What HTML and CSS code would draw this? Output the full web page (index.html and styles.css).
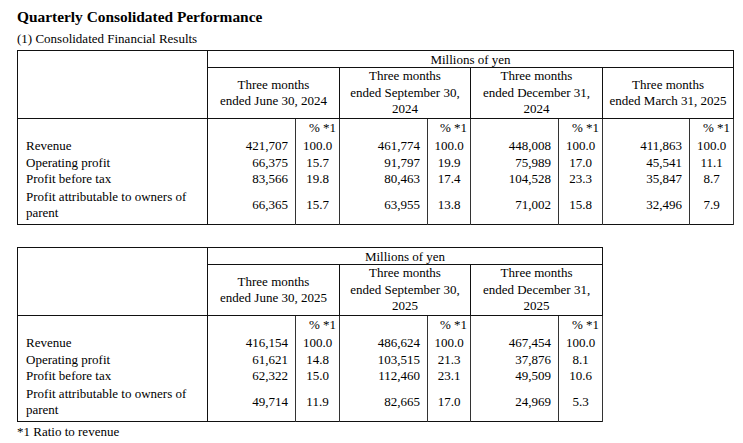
FILE: index.html
```html
<!DOCTYPE html>
<html>
<head>
<meta charset="utf-8">
<link rel="stylesheet" href="styles.css">
</head>
<body>
<div class="page">
  <h1 class="title">Quarterly Consolidated Performance</h1>
  <p class="subtitle">(1) Consolidated Financial Results</p>

  <table class="fin fin-wide">
    <colgroup>
      <col class="c-label"><col class="c-val"><col class="c-pct"><col class="c-val"><col class="c-pct2"><col class="c-val"><col class="c-pct"><col class="c-val2"><col class="c-pct">
    </colgroup>
    <tr class="r-unit">
      <th class="blank" rowspan="2"></th>
      <th colspan="8" class="unit">Millions of yen</th>
    </tr>
    <tr class="r-period">
      <th colspan="2">Three months<br>ended June 30, 2024</th>
      <th colspan="2">Three months<br>ended September 30,<br>2024</th>
      <th colspan="2">Three months<br>ended December 31,<br>2024</th>
      <th colspan="2">Three months<br>ended March 31, 2025</th>
    </tr>
    <tr class="r-pcthead">
      <td class="lbl"></td>
      <td class="v"></td><td class="p ph">% *1</td>
      <td class="v"></td><td class="p ph">% *1</td>
      <td class="v"></td><td class="p ph">% *1</td>
      <td class="v"></td><td class="p ph">% *1</td>
    </tr>
    <tr class="r-first">
      <td class="lbl">Revenue</td>
      <td class="v">421,707</td><td class="p">100.0</td>
      <td class="v">461,774</td><td class="p">100.0</td>
      <td class="v">448,008</td><td class="p">100.0</td>
      <td class="v">411,863</td><td class="p">100.0</td>
    </tr>
    <tr class="r-data">
      <td class="lbl">Operating profit</td>
      <td class="v">66,375</td><td class="p">15.7</td>
      <td class="v">91,797</td><td class="p">19.9</td>
      <td class="v">75,989</td><td class="p">17.0</td>
      <td class="v">45,541</td><td class="p">11.1</td>
    </tr>
    <tr class="r-data">
      <td class="lbl">Profit before tax</td>
      <td class="v">83,566</td><td class="p">19.8</td>
      <td class="v">80,463</td><td class="p">17.4</td>
      <td class="v">104,528</td><td class="p">23.3</td>
      <td class="v">35,847</td><td class="p">8.7</td>
    </tr>
    <tr class="r-last">
      <td class="lbl">Profit attributable to owners of parent</td>
      <td class="v">66,365</td><td class="p">15.7</td>
      <td class="v">63,955</td><td class="p">13.8</td>
      <td class="v">71,002</td><td class="p">15.8</td>
      <td class="v">32,496</td><td class="p">7.9</td>
    </tr>
  </table>

  <table class="fin fin-narrow">
    <colgroup>
      <col class="c-label"><col class="c-val"><col class="c-pct"><col class="c-val"><col class="c-pct2"><col class="c-val"><col class="c-pct">
    </colgroup>
    <tr class="r-unit">
      <th class="blank" rowspan="2"></th>
      <th colspan="6" class="unit">Millions of yen</th>
    </tr>
    <tr class="r-period">
      <th colspan="2">Three months<br>ended June 30, 2025</th>
      <th colspan="2">Three months<br>ended September 30,<br>2025</th>
      <th colspan="2">Three months<br>ended December 31,<br>2025</th>
    </tr>
    <tr class="r-pcthead">
      <td class="lbl"></td>
      <td class="v"></td><td class="p ph">% *1</td>
      <td class="v"></td><td class="p ph">% *1</td>
      <td class="v"></td><td class="p ph">% *1</td>
    </tr>
    <tr class="r-first">
      <td class="lbl">Revenue</td>
      <td class="v">416,154</td><td class="p">100.0</td>
      <td class="v">486,624</td><td class="p">100.0</td>
      <td class="v">467,454</td><td class="p">100.0</td>
    </tr>
    <tr class="r-data">
      <td class="lbl">Operating profit</td>
      <td class="v">61,621</td><td class="p">14.8</td>
      <td class="v">103,515</td><td class="p">21.3</td>
      <td class="v">37,876</td><td class="p">8.1</td>
    </tr>
    <tr class="r-data">
      <td class="lbl">Profit before tax</td>
      <td class="v">62,322</td><td class="p">15.0</td>
      <td class="v">112,460</td><td class="p">23.1</td>
      <td class="v">49,509</td><td class="p">10.6</td>
    </tr>
    <tr class="r-last">
      <td class="lbl">Profit attributable to owners of parent</td>
      <td class="v">49,714</td><td class="p">11.9</td>
      <td class="v">82,665</td><td class="p">17.0</td>
      <td class="v">24,969</td><td class="p">5.3</td>
    </tr>
  </table>

  <p class="note">*1 Ratio to revenue</p>
</div>
</body>
</html>
```

FILE: styles.css
```css
* { box-sizing: border-box; }

html, body {
  margin: 0;
  padding: 0;
  background: #ffffff;
}

body {
  font-family: "Liberation Serif", "Times New Roman", serif;
  font-size: 13px;
  color: #000000;
}

.page {
  padding: 7px 0 0 17px;
}

.title {
  margin: 0;
  font-size: 15.4px;
  font-weight: bold;
  line-height: 20px;
}

.subtitle {
  margin: 4px 0 0;
  line-height: 16px;
}

.fin {
  border-collapse: collapse;
  table-layout: fixed;
  border: 1px solid #111;
  margin-top: 3px;
}

.fin-wide { width: 717px; }
.fin-narrow { width: 585px; margin-top: 22px; }

.c-label { width: 190px; }
.c-val { width: 88px; }
.c-val2 { width: 87px; }
.c-pct { width: 44px; }
.c-pct2 { width: 43px; }

.fin th {
  font-weight: normal;
  border: 1px solid #111;
  padding: 0;
  line-height: 16.5px;
  text-align: center;
  vertical-align: middle;
}

.r-unit th { height: 17px; line-height: 15px; }
.r-period th { height: 51px; }

.fin td {
  padding: 0;
  line-height: 16px;
  border-right: 1px solid #333;
  vertical-align: middle;
  white-space: nowrap;
}

.fin td.lbl {
  padding-left: 8px;
  border-right: 1px solid #111;
  white-space: normal;
}

.fin td.v {
  text-align: right;
  padding-right: 7px;
}

.fin td.p {
  text-align: center;
}

.fin td.ph {
  text-align: right;
  padding-right: 3px;
}

.r-pcthead td { height: 19px; vertical-align: top; padding-top: 1px; }
.r-first td { height: 17px; }
.r-data td { height: 16px; }
.r-last td { height: 38px; }
.r-last td.lbl { padding-right: 20px; }

.note {
  margin: 2px 0 0;
  line-height: 16px;
}
```
